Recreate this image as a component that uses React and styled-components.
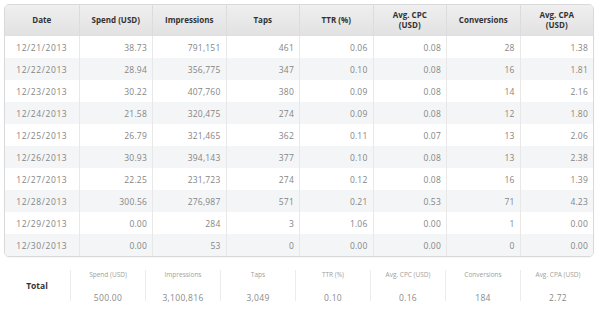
import React from 'react';
import styled, { createGlobalStyle } from 'styled-components';

const GlobalStyle = createGlobalStyle`
  body {
    margin: 0;
    background: #ffffff;
    font-family: "Open Sans", "DejaVu Sans", sans-serif;
  }
`;

const Page = styled.div`
  box-sizing: border-box;
  min-height: 310px;
  padding: 4px 6px 0 4px;
  width: 600px;
`;

const TableFrame = styled.div`
  border: 1px solid #d9d9d9;
  border-radius: 5px;
  overflow: hidden;
  box-shadow: 0 1px 1px rgba(0, 0, 0, 0.04);
`;

const Table = styled.table`
  width: 100%;
  border-spacing: 0;
  table-layout: fixed;
`;

const HeadCell = styled.th`
  height: 30px;
  padding: 0 4px;
  background: linear-gradient(#efefef, #e2e2e2);
  color: #333333;
  font-size: 8px;
  font-weight: 700;
  line-height: 10px;
  text-align: center;
  border-left: 1px solid #dcdcdc;
  border-bottom: 1px solid #e0e0e0;
  &:first-child {
    border-left: none;
  }
`;

const Row = styled.tr`
  background: ${p => (p.$striped ? '#f4f5f6' : '#ffffff')};
`;

const Cell = styled.td`
  height: 22px;
  padding: 0 5px 0 0;
  color: #858585;
  font-size: 8.5px;
  text-align: ${p => (p.$date ? 'center' : 'right')};
  letter-spacing: ${p => (p.$date ? '0.6px' : '0.2px')};
  border-left: 1px solid #e8e8e8;
  &:first-child {
    border-left: none;
    padding: 0;
  }
`;

const Totals = styled.div`
  display: grid;
  grid-template-columns: 66px repeat(7, 75px);
  margin-top: 13px;
`;

const TotalTitle = styled.div`
  display: flex;
  align-items: center;
  justify-content: center;
  color: #333333;
  font-size: 8.5px;
  font-weight: 700;
`;

const TotalCell = styled.div`
  display: flex;
  flex-direction: column;
  align-items: center;
  justify-content: space-between;
  height: 31px;
  border-left: 1px solid #ececec;
`;

const TotalLabel = styled.span`
  color: #a0a0a0;
  font-size: 6.5px;
  line-height: 10px;
`;

const TotalValue = styled.span`
  color: #8a8a8a;
  font-size: 8.5px;
  line-height: 10px;
  letter-spacing: 0.3px;
  margin-bottom: -2px;
`;

const headers = [
  ['Date'],
  ['Spend (USD)'],
  ['Impressions'],
  ['Taps'],
  ['TTR (%)'],
  ['Avg. CPC', '(USD)'],
  ['Conversions'],
  ['Avg. CPA', '(USD)'],
];

const rows = [
  ['12/21/2013', '38.73', '791,151', '461', '0.06', '0.08', '28', '1.38'],
  ['12/22/2013', '28.94', '356,775', '347', '0.10', '0.08', '16', '1.81'],
  ['12/23/2013', '30.22', '407,760', '380', '0.09', '0.08', '14', '2.16'],
  ['12/24/2013', '21.58', '320,475', '274', '0.09', '0.08', '12', '1.80'],
  ['12/25/2013', '26.79', '321,465', '362', '0.11', '0.07', '13', '2.06'],
  ['12/26/2013', '30.93', '394,143', '377', '0.10', '0.08', '13', '2.38'],
  ['12/27/2013', '22.25', '231,723', '274', '0.12', '0.08', '16', '1.39'],
  ['12/28/2013', '300.56', '276,987', '571', '0.21', '0.53', '71', '4.23'],
  ['12/29/2013', '0.00', '284', '3', '1.06', '0.00', '1', '0.00'],
  ['12/30/2013', '0.00', '53', '0', '0.00', '0.00', '0', '0.00'],
];

const totals = [
  ['Spend (USD)', '500.00'],
  ['Impressions', '3,100,816'],
  ['Taps', '3,049'],
  ['TTR (%)', '0.10'],
  ['Avg. CPC (USD)', '0.16'],
  ['Conversions', '184'],
  ['Avg. CPA (USD)', '2.72'],
];

export default function App() {
  return (
    <Page>
      <GlobalStyle />
      <TableFrame>
        <Table>
          <thead>
            <tr>
              {headers.map((lines, i) => (
                <HeadCell key={i}>
                  {lines.map((l, j) => (
                    <React.Fragment key={j}>
                      {j > 0 && <br />}
                      {l}
                    </React.Fragment>
                  ))}
                </HeadCell>
              ))}
            </tr>
          </thead>
          <tbody>
            {rows.map((r, i) => (
              <Row key={i} $striped={i % 2 === 1}>
                {r.map((v, j) => (
                  <Cell key={j} $date={j === 0}>{v}</Cell>
                ))}
              </Row>
            ))}
          </tbody>
        </Table>
      </TableFrame>
      <Totals>
        <TotalTitle>Total</TotalTitle>
        {totals.map(([label, value]) => (
          <TotalCell key={label}>
            <TotalLabel>{label}</TotalLabel>
            <TotalValue>{value}</TotalValue>
          </TotalCell>
        ))}
      </Totals>
    </Page>
  );
}
